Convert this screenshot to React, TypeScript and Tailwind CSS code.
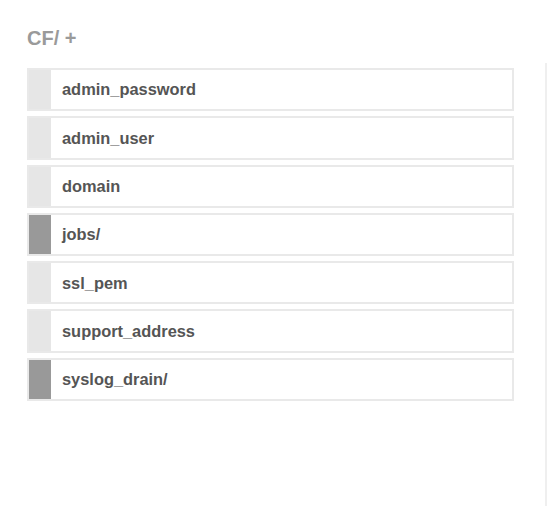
const items = [
  { name: "admin_password", folder: false },
  { name: "admin_user", folder: false },
  { name: "domain", folder: false },
  { name: "jobs/", folder: true },
  { name: "ssl_pem", folder: false },
  { name: "support_address", folder: false },
  { name: "syslog_drain/", folder: true },
];

export default function App() {
  return (
    <div className="flex h-[506px] w-[550px] bg-white font-['Liberation_Sans',Arial,sans-serif]">
      <div className="ml-[27px] w-[487px]">
        <h1 className="mt-[26px] text-[20px] font-bold leading-[24px] text-[#9a9a9a]">
          CF/ +
        </h1>
        <ul className="mt-[18px] flex flex-col gap-[5px]">
          {items.map((item) => (
            <li
              key={item.name}
              className="flex h-[43.3px] border-2 border-[#e9e9e9] bg-white"
            >
              <div
                className={
                  item.folder
                    ? "w-[22px] shrink-0 bg-[#999999]"
                    : "w-[22px] shrink-0 bg-[#e6e6e6]"
                }
              />
              <span className="flex items-center pl-[11px] text-[16.4px] font-bold text-[#555555]">
                {item.name}
              </span>
            </li>
          ))}
        </ul>
      </div>
      <div className="ml-[31px] mt-[63px] h-[443px] border-l-2 border-[#efefef]" />
    </div>
  );
}
